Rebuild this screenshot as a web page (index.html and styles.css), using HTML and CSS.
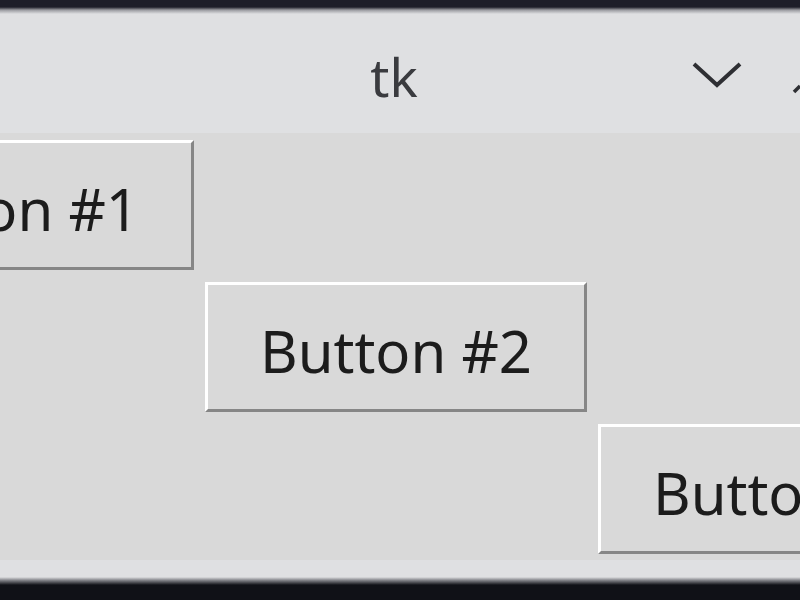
FILE: index.html
```html
<!DOCTYPE html>
<html>
<head>
<meta charset="utf-8">
<link rel="stylesheet" href="styles.css">
</head>
<body>
<div class="window">
  <div class="edge-top"></div>
  <div class="titlebar">
    <span class="title">tk</span>
    <svg class="chev" width="52" height="30" viewBox="0 0 52 30"><path d="M3 4 L26 25 L49 4" fill="none" stroke="#2e2f33" stroke-width="4" stroke-linejoin="miter"/></svg>
    <svg class="next" width="8" height="20" viewBox="0 0 8 20"><path d="M2 18 L8 12" fill="none" stroke="#2e2f33" stroke-width="3.5"/></svg>
  </div>
  <div class="content">
    <div class="grid">
      <div class="btn b1">Button #1</div>
      <div class="btn b2">Button #2</div>
      <div class="btn b3">Button #3</div>
    </div>
  </div>
  <div class="bottom"></div>
  <div class="edge-bottom"></div>
</div>
</body>
</html>
```
FILE: styles.css
```css
html, body {
  margin: 0;
  padding: 0;
  background: #101117;
}
.window {
  width: 800px;
  height: 600px;
  overflow: hidden;
  display: flex;
  flex-direction: column;
  font-family: "Noto Sans", "Open Sans", sans-serif;
}
.edge-top {
  height: 14px;
  background: linear-gradient(to bottom, #1d1e29 0px, #1d1e29 7px, #9a9ba0 10px, #dfe0e2 14px);
}
.titlebar {
  height: 119px;
  background: #dfe0e2;
  display: flex;
  align-items: center;
  position: relative;
}
.title {
  position: absolute;
  left: 0;
  right: 0;
  top: 36px;
  text-align: center;
  margin-left: -12px;
  font-size: 53px;
  line-height: 53px;
  color: #3a3b3f;
}
.chev {
  position: absolute;
  left: 691px;
  top: 46px;
}
.next {
  position: absolute;
  left: 792px;
  top: 60px;
}
.content {
  height: 427px;
  background: #d9d9d9;
  overflow: hidden;
  padding-top: 7px;
  box-sizing: border-box;
}
.grid {
  display: grid;
  grid-template-columns: repeat(3, 382px);
  column-gap: 11px;
  row-gap: 12px;
  margin-left: -188px;
}
.btn {
  height: 130px;
  box-sizing: border-box;
  border-style: solid;
  border-width: 3px;
  border-color: #ffffff #868686 #868686 #ffffff;
  background: #d9d9d9;
  display: flex;
  align-items: center;
  justify-content: center;
  padding-top: 6px;
  font-size: 58px;
  color: #1c1c1c;
  white-space: nowrap;
}
.b1 { grid-column: 1; grid-row: 1; }
.b2 { grid-column: 2; grid-row: 2; }
.b3 { grid-column: 3; grid-row: 3; }
.bottom {
  height: 17px;
  background: #dfe0e2;
}
.edge-bottom {
  flex: 1;
  background: linear-gradient(to bottom, #dfe0e2 0px, #8a8b90 3px, #101117 8px, #101117 100%);
}
```
